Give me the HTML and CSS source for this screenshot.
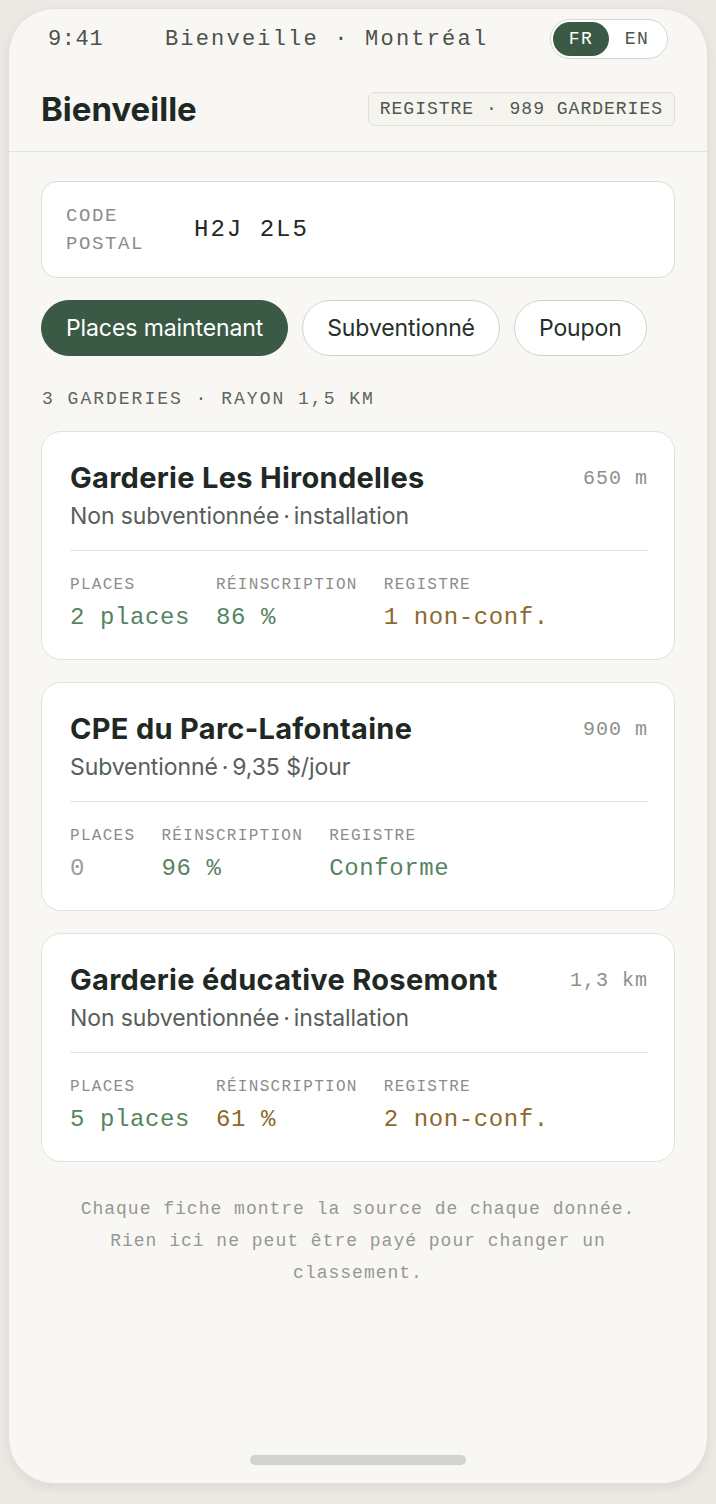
FILE: index.html
```html
<!DOCTYPE html>
<html lang="fr">
<head>
    <meta charset="UTF-8">
    <meta name="viewport" content="width=device-width, initial-scale=1.0">
    <title>Bienveille</title>
    <link rel="stylesheet" href="styles.css">
</head>
<body>
    <div class="phone">
        <!-- Status bar -->
        <div class="status-bar">
            <span class="time">9:41</span>
            <span class="status-title">Bienveille · Montréal</span>
            <div class="lang-toggle">
                <span class="lang active">FR</span>
                <span class="lang">EN</span>
            </div>
        </div>

        <!-- App header -->
        <header class="app-header">
            <h1 class="brand">Bienveille</h1>
            <span class="registry-badge">REGISTRE · 989 GARDERIES</span>
        </header>

        <main class="content">
            <div class="postal-box">
                <span class="postal-label">CODE<br>POSTAL</span>
                <span class="postal-value">H2J 2L5</span>
            </div>

            <div class="filters">
                <button class="chip active">Places maintenant</button>
                <button class="chip">Subventionné</button>
                <button class="chip">Poupon</button>
            </div>

            <p class="result-count">3 GARDERIES · RAYON 1,5 KM</p>

            <div class="card">
                <div class="card-head">
                    <h2 class="card-title">Garderie Les Hirondelles</h2>
                    <span class="distance">650 m</span>
                </div>
                <p class="card-sub">Non subventionnée<span class="sep">·</span>installation</p>
                <div class="stats">
                    <span class="stat-label">PLACES</span>
                    <span class="stat-label">RÉINSCRIPTION</span>
                    <span class="stat-label">REGISTRE</span>
                    <span class="stat-value good">2 places</span>
                    <span class="stat-value good">86 %</span>
                    <span class="stat-value warn">1 non-conf.</span>
                </div>
            </div>

            <div class="card">
                <div class="card-head">
                    <h2 class="card-title">CPE du Parc-Lafontaine</h2>
                    <span class="distance">900 m</span>
                </div>
                <p class="card-sub">Subventionné<span class="sep">·</span>9,35 $/jour</p>
                <div class="stats">
                    <span class="stat-label">PLACES</span>
                    <span class="stat-label">RÉINSCRIPTION</span>
                    <span class="stat-label">REGISTRE</span>
                    <span class="stat-value none">0</span>
                    <span class="stat-value good">96 %</span>
                    <span class="stat-value good">Conforme</span>
                </div>
            </div>

            <div class="card">
                <div class="card-head">
                    <h2 class="card-title">Garderie éducative Rosemont</h2>
                    <span class="distance">1,3 km</span>
                </div>
                <p class="card-sub">Non subventionnée<span class="sep">·</span>installation</p>
                <div class="stats">
                    <span class="stat-label">PLACES</span>
                    <span class="stat-label">RÉINSCRIPTION</span>
                    <span class="stat-label">REGISTRE</span>
                    <span class="stat-value good">5 places</span>
                    <span class="stat-value warn">61 %</span>
                    <span class="stat-value warn">2 non-conf.</span>
                </div>
            </div>

            <p class="footnote">Chaque fiche montre la source de chaque donnée. Rien ici ne peut être payé pour changer un classement.</p>
        </main>

        <div class="home-indicator"></div>
    </div>
</body>
</html>
```

FILE: styles.css
```css
body {
    margin: 0;
    padding: 8px;
    background-color: #ebe9e3;
    font-family: Inter, "Noto Sans", sans-serif;
    color: #1f2a24;
}
.phone {
    width: 698px;
    height: 1474px;
    background-color: #f8f7f3;
    border: 1px solid #e2e1da;
    border-radius: 46px;
    box-shadow: 0 4px 10px rgba(60, 55, 40, 0.08);
    overflow: hidden;
    display: flex;
    flex-direction: column;
}
/* Status bar */
.status-bar {
    display: flex;
    justify-content: space-between;
    align-items: center;
    padding: 11px 39px 0 39px;
    height: 38px;
    font-family: "Liberation Mono", monospace;
    font-size: 22px;
    letter-spacing: 2.2px;
    color: #4b524d;
}
.time {
    letter-spacing: 0.6px;
}
.lang-toggle {
    display: flex;
    padding: 2px;
    background: #fff;
    border: 1px solid #d6d6ce;
    border-radius: 20px;
}
.lang {
    width: 56px;
    height: 34px;
    line-height: 34px;
    text-align: center;
    font-size: 18px;
    letter-spacing: 1.5px;
    border-radius: 17px;
    color: #4b524d;
}
.lang.active {
    background-color: #3a5a45;
    color: #fff;
}
/* Header */
.app-header {
    display: flex;
    justify-content: space-between;
    align-items: center;
    padding: 34px 32px 25px 32px;
    border-bottom: 1px solid #e1e3dd;
}
.brand {
    margin: 0;
    font-size: 33px;
    font-weight: 700;
    letter-spacing: 0;
    line-height: 34px;
    color: #1f2924;
}
.registry-badge {
    height: 32px;
    line-height: 32px;
    padding: 0 11px;
    border: 1px solid #e0e0d9;
    border-radius: 6px;
    background: #f5f4ef;
    font-family: "Liberation Mono", monospace;
    font-size: 18px;
    letter-spacing: 1px;
    color: #4f5651;
}
.content {
    padding: 29px 32px 0 32px;
}
/* Postal code field */
.postal-box {
    display: flex;
    align-items: center;
    gap: 50px;
    height: 95px;
    padding: 0 24px;
    background: #fff;
    border: 1px solid #dcdcd4;
    border-radius: 16px;
}
.postal-label {
    font-family: "Liberation Mono", monospace;
    font-size: 19px;
    line-height: 28px;
    letter-spacing: 1.6px;
    color: #8b8d88;
}
.postal-value {
    font-family: "Liberation Mono", monospace;
    font-size: 24px;
    letter-spacing: 2px;
    color: #232824;
}
/* Filter chips */
.filters {
    display: flex;
    gap: 14px;
    margin-top: 22px;
}
.chip {
    height: 56px;
    padding: 0 24px;
    border: 1px solid #d3d3cb;
    border-radius: 28px;
    background: #fff;
    font-family: Inter, sans-serif;
    font-size: 23px;
    letter-spacing: -0.1px;
    color: #26302a;
}
.chip.active {
    background-color: #3a5a45;
    border-color: #3a5a45;
    color: #fff;
}
.result-count {
    margin: 31px 0 20px 1px;
    line-height: 24px;
    font-family: "Liberation Mono", monospace;
    font-size: 18px;
    letter-spacing: 2px;
    color: #5f6561;
}
/* Daycare cards */
.card {
    background: #fff;
    border: 1px solid #e2e2dc;
    border-radius: 20px;
    padding: 29px 26px 26px 28px;
    margin-bottom: 22px;
}
.card-head {
    display: flex;
    justify-content: space-between;
    align-items: center;
}
.card-title {
    margin: 0;
    font-size: 29px;
    line-height: 34px;
    font-weight: 700;
    letter-spacing: 0.3px;
    color: #1f2924;
}
.distance {
    font-family: "Liberation Mono", monospace;
    font-size: 20px;
    letter-spacing: 1px;
    color: #8e908c;
}
.card-sub {
    margin: 6px 0 0 0;
    padding-bottom: 19px;
    border-bottom: 1px solid #e1e3df;
    line-height: 30px;
    font-size: 23px;
    letter-spacing: -0.1px;
    color: #585e5a;
}
.sep {
    margin: 0 4px;
}
.stats {
    display: grid;
    grid-template-columns: repeat(3, auto);
    justify-content: start;
    column-gap: 26px;
    row-gap: 8px;
    margin-top: 24px;
    font-family: "Liberation Mono", monospace;
}
.stat-label {
    font-size: 16px;
    line-height: 20px;
    letter-spacing: 1.3px;
    color: #8b8d89;
}
.stat-value {
    font-size: 24px;
    line-height: 30px;
    letter-spacing: 0.6px;
}
.good {
    color: #56845f;
}
.warn {
    color: #8c6a2c;
}
.none {
    color: #9a9c98;
}
.footnote {
    margin: 31px 30px 0 30px;
    text-align: center;
    font-family: "Liberation Mono", monospace;
    font-size: 18px;
    line-height: 32px;
    letter-spacing: 1px;
    color: #969893;
}
.home-indicator {
    width: 216px;
    height: 10px;
    margin: auto auto 18px auto;
    border-radius: 5px;
    background-color: #d2d3cd;
}
```
